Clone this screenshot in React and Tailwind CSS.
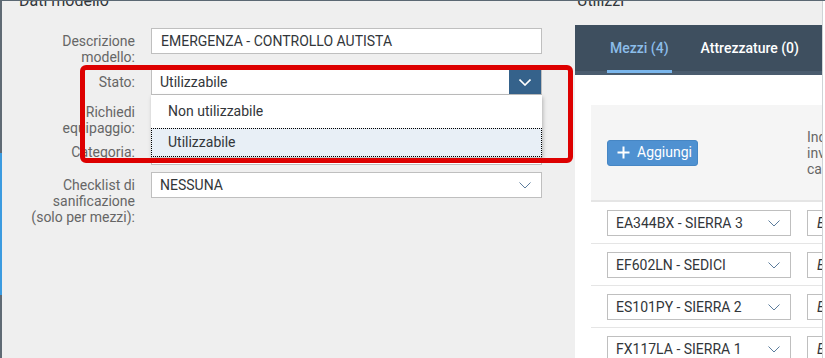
const inputBox = 'h-[26px] border border-[#bfbfbf] bg-white flex items-center text-[14px] text-[#32363a]'

export default function App() {
  return (
    <div className="w-[825px] h-[358px] overflow-hidden bg-[#efefef] border-t border-[#5b6873] flex font-['Roboto','Liberation_Sans',sans-serif]">
      <EdgeStrip />
      <ModelPanel />
      <UsagePanel />
      <div className="flex-1 bg-white" />
    </div>
  )
}

function EdgeStrip() {
  return (
    <div className="w-[2px] shrink-0 flex flex-col">
      <div className="h-[152px] bg-[#5f6a74]" />
      <div className="h-[142px] bg-[#3b9be0]" />
      <div className="flex-1 bg-[#5f6a74]" />
    </div>
  )
}

function FormRow({ label, className = '', children }) {
  return (
    <div className={`flex items-start ${className}`}>
      <div className="ml-[28px] w-[105px] shrink-0 pt-[5px] text-right text-[14px] leading-[16px] text-[#666]">
        {label}
      </div>
      <div className="ml-[16px] w-[391px]">{children}</div>
    </div>
  )
}

function ModelPanel() {
  return (
    <div className="relative w-[573px] shrink-0">
      <div className="-mt-[10px] h-[20px] pl-[17px] text-[16px] leading-[20px] text-[#32363a]">Dati modello</div>

      <FormRow className="mt-[17px]" label={<>Descrizione<br />modello:</>}>
        <div className={`${inputBox} px-[9px]`}>EMERGENZA - CONTROLLO AUTISTA</div>
      </FormRow>

      <FormRow className="mt-[4px]" label="Stato:">
        <div className={`${inputBox} border-[#6f91b5] pl-[8px]`}>
          <span className="flex-1">Utilizzabile</span>
          <span className="w-[32px] h-full bg-[#35628b] flex items-center justify-center text-white">
            <Chevron strokeWidth={1.6} />
          </span>
        </div>
      </FormRow>

      <FormRow className="mt-[4px]" label={<>Richiedi<br />equipaggio:</>}>
        <div className="h-[37px]" />
      </FormRow>

      <FormRow className="mt-[3px]" label="Categoria:">
        <div className={`${inputBox} px-[9px]`} />
      </FormRow>

      <FormRow className="mt-[7px]" label={<>Checklist di<br />sanificazione<br />(solo per mezzi):</>}>
        <div className={`${inputBox} pl-[8px] pr-[10px]`}>
          <span className="flex-1">NESSUNA</span>
          <Chevron className="text-[#5b7c9c]" />
        </div>
      </FormRow>

      {/* open listbox of "Stato" */}
      <div className="absolute left-[149px] top-[94px] w-[391px] bg-white shadow-[1px_2px_4px_rgba(0,0,0,0.25)] text-[14px] text-[#32363a]">
        <div className="h-[33px] flex items-center pl-[17px]">Non utilizzabile</div>
        <div className="h-[29px] flex items-center pl-[16px] bg-[#e8eff6] border border-dotted border-black">Utilizzabile</div>
      </div>

      {/* annotation frame */}
      <div className="absolute left-[78px] top-[64px] w-[493px] h-[98px] border-[5px] border-[#dd0000] rounded-[6px] pointer-events-none" />
    </div>
  )
}

function Tab({ active, children }) {
  return (
    <div className={`relative flex items-center px-[3px] pb-[4px] text-[14px] font-medium whitespace-nowrap ${active ? 'text-[#8cbde9]' : 'text-white'}`}>
      {children}
      {active && <span className="absolute left-0 right-0 bottom-[2px] h-[3px] bg-[#7ab6ec]" />}
    </div>
  )
}

const vehicles = ['EA344BX - SIERRA 3', 'EF602LN - SEDICI', 'ES101PY - SIERRA 2', 'FX117LA - SIERRA 1']

function UsagePanel() {
  return (
    <div className="w-[248px] shrink-0 border-r border-[#cfd3d6] flex flex-col overflow-hidden">
      <div className="-mt-[10px] h-[20px] pl-[2px] text-[16px] leading-[20px] text-[#32363a] whitespace-nowrap">Utilizzi</div>

      <div className="mt-[14px] h-[50px] shrink-0 bg-[#3e4f5f] shadow-[inset_0_-4px_0_#4a5c6e] flex pl-[32px] gap-[26px]">
        <Tab active>Mezzi (4)</Tab>
        <Tab>Attrezzature (0)</Tab>
      </div>

      <div className="flex-1 bg-white pl-[16px] pt-[30px]">
        <div className="w-[420px] h-[97px] bg-[#f5f5f5] border-b-2 border-[#e5e5e5] flex items-center pl-[16px] gap-[16px]">
          <div className="w-[184px] shrink-0">
            <button className="h-[26px] w-[91px] rounded-[3px] bg-[#4f91d1] border border-[#4686c4] flex items-center pl-[9px] gap-[7px] text-white text-[14px]">
              <svg width="13" height="13" viewBox="0 0 13 13" fill="none" stroke="currentColor" strokeWidth="2" aria-hidden="true"><path d="M6.5 0.5v12M0.5 6.5h12" /></svg>
              Aggiungi
            </button>
          </div>
          <div className="text-[14px] leading-[16px] text-[#666] whitespace-nowrap">
            Indicare i mezzi da<br />inviare in<br />caso di emergenza
          </div>
        </div>

        {vehicles.map((v) => (
          <div key={v} className="w-[420px] flex pl-[16px] gap-[16px] pt-[8px] pb-[7px] border-b border-[#e5e5e5]">
            <div className={`${inputBox} w-[184px] shrink-0 h-[25px] pl-[8px] pr-[10px]`}>
              <span className="flex-1 whitespace-nowrap">{v}</span>
              <Chevron className="text-[#5b7c9c]" />
            </div>
            <div className={`${inputBox} w-[200px] h-[25px] pl-[9px] italic text-[#8a8a8a]`}>Es. note</div>
          </div>
        ))}
      </div>
    </div>
  )
}

function Chevron({ className = '', strokeWidth = 1 }) {
  return (
    <svg width="12" height="7" viewBox="0 0 12 7" className={className} fill="none" stroke="currentColor" strokeWidth={strokeWidth} aria-hidden="true">
      <path d="M0.5 0.5L6 6l5.5-5.5" />
    </svg>
  )
}
